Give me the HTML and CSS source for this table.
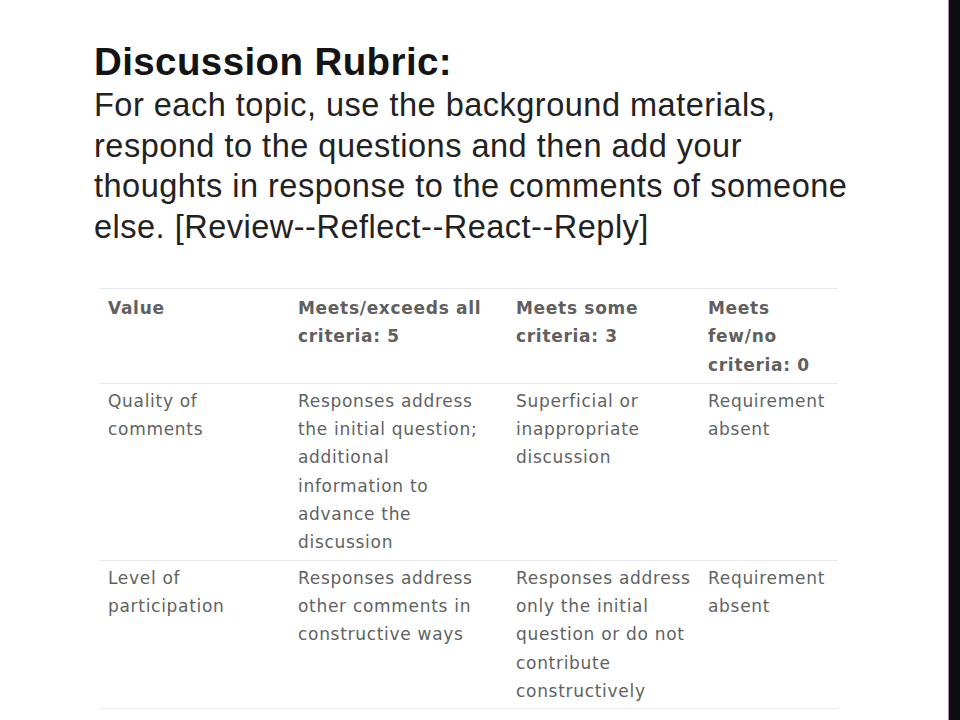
FILE: index.html
```html
<!DOCTYPE html>
<html>
<head>
<meta charset="utf-8">
<link rel="stylesheet" href="styles.css">
</head>
<body>
<div class="slide">
  <main class="content">
    <h1 class="title">Discussion Rubric:</h1>
    <p class="intro">For each topic, use the background materials,<br>respond to the questions and then add your<br>thoughts in response to the comments of someone<br>else. [Review--Reflect--React--Reply]</p>
    <table class="rubric">
      <colgroup>
        <col class="c1"><col class="c2"><col class="c3"><col class="c4">
      </colgroup>
      <thead>
        <tr>
          <th>Value</th>
          <th>Meets/exceeds all<br>criteria: 5</th>
          <th>Meets some<br>criteria: 3</th>
          <th>Meets<br>few/no<br>criteria: 0</th>
        </tr>
      </thead>
      <tbody>
        <tr>
          <td>Quality of<br>comments</td>
          <td>Responses address<br>the initial question;<br>additional<br>information to<br>advance the<br>discussion</td>
          <td>Superficial or<br>inappropriate<br>discussion</td>
          <td>Requirement<br>absent</td>
        </tr>
        <tr>
          <td>Level of<br>participation</td>
          <td>Responses address<br>other comments in<br>constructive ways</td>
          <td>Responses address<br>only the initial<br>question or do not<br>contribute<br>constructively</td>
          <td>Requirement<br>absent</td>
        </tr>
      </tbody>
    </table>
  </main>
  <div class="edge"></div>
</div>
</body>
</html>
```
FILE: styles.css
```css
html, body {
  margin: 0;
  padding: 0;
  background: #ffffff;
}

.slide {
  display: flex;
  width: 960px;
  height: 720px;
  overflow: hidden;
}

.content {
  flex: 1;
  padding: 40px 0 0 94px;
}

.title {
  margin: 0;
  font-family: "Liberation Sans", Arial, sans-serif;
  font-weight: bold;
  font-size: 38.5px;
  line-height: 44px;
  letter-spacing: 0.4px;
  color: #141414;
}

.intro {
  margin: 1px 0 0 0;
  font-family: "Liberation Sans", Arial, sans-serif;
  font-size: 32.5px;
  line-height: 40.5px;
  letter-spacing: 0.5px;
  color: #222222;
}

.rubric {
  margin: 41px 0 0 6px;
  width: 738px;
  table-layout: fixed;
  border-collapse: collapse;
  font-family: "DejaVu Sans", Verdana, sans-serif;
  font-size: 17px;
  line-height: 28.3px;
  letter-spacing: 0.7px;
  color: #606262;
}

.c1 { width: 190px; }
.c2 { width: 218px; }
.c3 { width: 192px; }
.c4 { width: 138px; }

.rubric th,
.rubric td {
  text-align: left;
  vertical-align: top;
  padding: 3px 8px 3px 8px;
  white-space: nowrap;
  border-top: 1px solid #e6eaea;
  border-bottom: 1px solid #e6eaea;
}

.rubric th {
  padding-top: 5px;
  padding-bottom: 4px;
  font-weight: bold;
  color: #606060;
}

.edge {
  width: 11px;
  flex: none;
  background: #0c0c0c;
  border-left: 1px solid #b58ab5;
}
```
